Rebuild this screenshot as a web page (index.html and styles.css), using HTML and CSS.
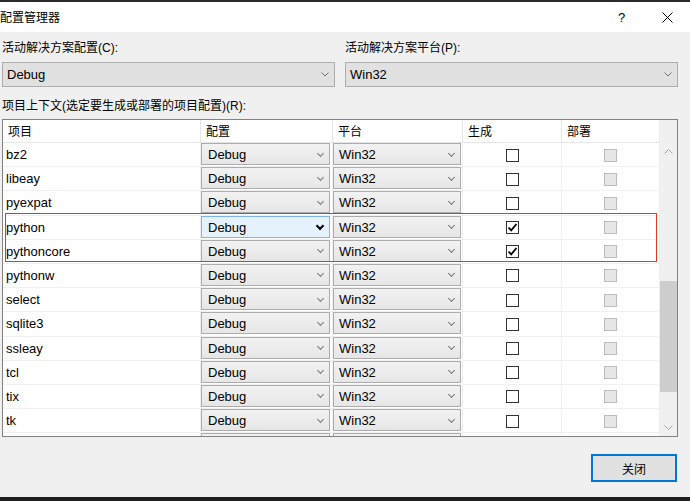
FILE: index.html
```html
<!DOCTYPE html>
<html lang="zh-CN">
<head>
<meta charset="utf-8">
<title>配置管理器</title>
<link rel="stylesheet" href="styles.css">
</head>
<body>
<div class="window">
  <div class="edge-top"></div>
  <header class="titlebar">
    <span class="title">配置管理器</span>
    <span class="cap-btn help">?</span>
    <span class="cap-btn close-x"><svg width="11" height="11" viewBox="0 0 11 11"><path d="M0.5 0.5 L10.5 10.5 M10.5 0.5 L0.5 10.5" stroke="#000" stroke-width="1" fill="none"/></svg></span>
  </header>
  <main class="content">
    <div class="pickers">
      <div class="picker">
        <div class="lbl">活动解决方案配置(C):</div>
        <div class="combo"><span>Debug</span><svg class="chev" width="8" height="5" viewBox="0 0 8 5"><path d="M0.5 0.5 L4 4 L7.5 0.5" stroke="#707070" fill="none"/></svg></div>
      </div>
      <div class="picker">
        <div class="lbl">活动解决方案平台(P):</div>
        <div class="combo"><span>Win32</span><svg class="chev" width="8" height="5" viewBox="0 0 8 5"><path d="M0.5 0.5 L4 4 L7.5 0.5" stroke="#707070" fill="none"/></svg></div>
      </div>
    </div>
    <div class="lbl ctx">项目上下文(选定要生成或部署的项目配置)(R):</div>
    <div class="grid">
      <div class="table">
        <div class="row head">
          <div class="cell">项目</div>
          <div class="cell">配置</div>
          <div class="cell">平台</div>
          <div class="cell">生成</div>
          <div class="cell">部署</div>
        </div>
        <div class="rows">
          <div class="row"><div class="cell name">bz2</div><div class="cell"><div class="dd cfg"><span>Debug</span><i></i></div></div><div class="cell"><div class="dd plat"><span>Win32</span><i></i></div></div><div class="cell chk"><span class="box"></span></div><div class="cell chk"><span class="box off"></span></div></div>
          <div class="row"><div class="cell name">libeay</div><div class="cell"><div class="dd cfg"><span>Debug</span><i></i></div></div><div class="cell"><div class="dd plat"><span>Win32</span><i></i></div></div><div class="cell chk"><span class="box"></span></div><div class="cell chk"><span class="box off"></span></div></div>
          <div class="row"><div class="cell name">pyexpat</div><div class="cell"><div class="dd cfg"><span>Debug</span><i></i></div></div><div class="cell"><div class="dd plat"><span>Win32</span><i></i></div></div><div class="cell chk"><span class="box"></span></div><div class="cell chk"><span class="box off"></span></div></div>
          <div class="row"><div class="cell name">python</div><div class="cell"><div class="dd cfg focus"><span>Debug</span><i></i></div></div><div class="cell"><div class="dd plat"><span>Win32</span><i></i></div></div><div class="cell chk"><span class="box on"><svg width="11" height="11" viewBox="0 0 11 11"><path d="M1.5 5.5 L4.2 8.3 L9.5 2" stroke="#000" stroke-width="1.8" fill="none"/></svg></span></div><div class="cell chk"><span class="box off"></span></div></div>
          <div class="row"><div class="cell name">pythoncore</div><div class="cell"><div class="dd cfg"><span>Debug</span><i></i></div></div><div class="cell"><div class="dd plat"><span>Win32</span><i></i></div></div><div class="cell chk"><span class="box on"><svg width="11" height="11" viewBox="0 0 11 11"><path d="M1.5 5.5 L4.2 8.3 L9.5 2" stroke="#000" stroke-width="1.8" fill="none"/></svg></span></div><div class="cell chk"><span class="box off"></span></div></div>
          <div class="row"><div class="cell name">pythonw</div><div class="cell"><div class="dd cfg"><span>Debug</span><i></i></div></div><div class="cell"><div class="dd plat"><span>Win32</span><i></i></div></div><div class="cell chk"><span class="box"></span></div><div class="cell chk"><span class="box off"></span></div></div>
          <div class="row"><div class="cell name">select</div><div class="cell"><div class="dd cfg"><span>Debug</span><i></i></div></div><div class="cell"><div class="dd plat"><span>Win32</span><i></i></div></div><div class="cell chk"><span class="box"></span></div><div class="cell chk"><span class="box off"></span></div></div>
          <div class="row"><div class="cell name">sqlite3</div><div class="cell"><div class="dd cfg"><span>Debug</span><i></i></div></div><div class="cell"><div class="dd plat"><span>Win32</span><i></i></div></div><div class="cell chk"><span class="box"></span></div><div class="cell chk"><span class="box off"></span></div></div>
          <div class="row"><div class="cell name">ssleay</div><div class="cell"><div class="dd cfg"><span>Debug</span><i></i></div></div><div class="cell"><div class="dd plat"><span>Win32</span><i></i></div></div><div class="cell chk"><span class="box"></span></div><div class="cell chk"><span class="box off"></span></div></div>
          <div class="row"><div class="cell name">tcl</div><div class="cell"><div class="dd cfg"><span>Debug</span><i></i></div></div><div class="cell"><div class="dd plat"><span>Win32</span><i></i></div></div><div class="cell chk"><span class="box"></span></div><div class="cell chk"><span class="box off"></span></div></div>
          <div class="row"><div class="cell name">tix</div><div class="cell"><div class="dd cfg"><span>Debug</span><i></i></div></div><div class="cell"><div class="dd plat"><span>Win32</span><i></i></div></div><div class="cell chk"><span class="box"></span></div><div class="cell chk"><span class="box off"></span></div></div>
          <div class="row"><div class="cell name">tk</div><div class="cell"><div class="dd cfg"><span>Debug</span><i></i></div></div><div class="cell"><div class="dd plat"><span>Win32</span><i></i></div></div><div class="cell chk"><span class="box"></span></div><div class="cell chk"><span class="box off"></span></div></div>
          <div class="row"><div class="cell name"></div><div class="cell"><div class="dd cfg"></div></div><div class="cell"><div class="dd plat"></div></div><div class="cell chk"><span class="box"></span></div><div class="cell chk"><span class="box off"></span></div></div>
        </div>
      </div>
      <div class="vscroll">
        <div class="sb-btn"><svg width="9" height="5" viewBox="0 0 9 5"><path d="M0.5 4.5 L4.5 0.5 L8.5 4.5" stroke="#a6a6a6" fill="none"/></svg></div>
        <div class="sb-track"><div class="sb-thumb"></div></div>
        <div class="sb-btn"><svg width="9" height="5" viewBox="0 0 9 5"><path d="M0.5 0.5 L4.5 4.5 L8.5 0.5" stroke="#a6a6a6" fill="none"/></svg></div>
      </div>
      <div class="mark"></div>
    </div>
    <div class="actions"><button class="btn">关闭</button></div>
  </main>
  <div class="edge-bottom"></div>
</div>
</body>
</html>
```
FILE: styles.css
```css
* { box-sizing: border-box; }
html, body { margin: 0; padding: 0; }
body {
  width: 690px;
  height: 501px;
  overflow: hidden;
  background: #f0f0f0;
  font-family: "Liberation Sans", "Noto Sans CJK SC", sans-serif;
  color: #000;
}
.window { width: 690px; height: 501px; display: flex; flex-direction: column; }
.edge-top { height: 2px; background: #2b2b2b; }
.edge-bottom { height: 4px; background: #1e1e1e; }

.titlebar {
  height: 30px;
  background: #fff;
  display: flex;
  align-items: center;
}
.title {
  font-family: "Noto Sans CJK SC", sans-serif;
  font-size: 12px;
  line-height: 16px;
  margin-left: 0;
  flex: 1;
}
.cap-btn {
  width: 46px;
  height: 30px;
  display: flex;
  align-items: center;
  justify-content: center;
}
.help { font-family: "Liberation Sans", sans-serif; font-size: 13px; padding-left: 1px; }

.content {
  height: 465px;
  padding: 8px 12px 0 2px;
  display: flex;
  flex-direction: column;
}
.lbl {
  font-family: "Liberation Sans", "Noto Sans CJK SC", sans-serif;
  font-size: 12px;
  line-height: 16px;
  white-space: nowrap;
}
.pickers { display: flex; gap: 10px; }
.picker { width: 333px; display: flex; flex-direction: column; }
.picker .lbl { margin-bottom: 6px; }
.combo {
  height: 25px;
  border: 1px solid #adadad;
  background: #e1e1e1;
  display: flex;
  align-items: center;
  justify-content: space-between;
  padding: 0 5px 0 4px;
  font-size: 13px;
}
.ctx { margin-top: 11px; }

.grid {
  position: relative;
  margin-top: 5px;
  width: 676px;
  height: 318px;
  border: 1px solid #828282;
  display: flex;
  background: #fff;
}
.table { width: 656px; display: flex; flex-direction: column; }
.row {
  display: grid;
  grid-template-columns: 197px 132px 130px 99px 98px;
  height: 24.2px;
  border-bottom: 1px solid #f0f0f0;
  flex: none;
}
.row .cell + .cell { border-left: 1px solid #f0f0f0; }
.head {
  height: 23px;
  border-bottom: 1px solid #e5e5e5;
}
.head .cell {
  font-size: 12px;
  line-height: 22px;
  padding-left: 5px;
  font-family: "Noto Sans CJK SC", sans-serif;
}
.head .cell + .cell { border-left: 1px solid #e5e5e5; }
.rows { flex: 1; overflow: hidden; }
.name {
  font-size: 13px;
  line-height: 24px;
  padding-left: 3px;
}
.dd {
  height: 22px;
  border: 1px solid #acacac;
  background: linear-gradient(#f2f2f2, #e6e6e6);
  display: flex;
  align-items: center;
  justify-content: space-between;
  padding: 1px 6px 0 6px;
  font-size: 13px;
}
.dd.cfg { width: 129px; }
.dd.plat { width: 128px; padding-left: 5px; }
.dd i {
  width: 5px;
  height: 5px;
  border-right: 1px solid #777;
  border-bottom: 1px solid #777;
  transform: rotate(45deg);
  margin-top: -3px;
}
.dd.focus { background: #e5f1fb; border-color: #7eb4ea; }
.dd.focus i { border-color: #000; border-width: 0 2px 2px 0; width: 6px; height: 6px; }
.chk { display: flex; align-items: center; justify-content: center; }
.box {
  width: 13px;
  height: 13px;
  border: 1px solid #333;
  background: #fff;
  display: flex;
  align-items: center;
  justify-content: center;
}
.box.off { background: #e6e6e6; border-color: #bcbcbc; }

.vscroll {
  width: 18px;
  background: #f0f0f0;
  padding-top: 23px;
  display: flex;
  flex-direction: column;
}
.sb-btn { height: 17px; display: flex; align-items: center; justify-content: center; }
.sb-track { flex: 1; }
.sb-thumb { margin: 121px 0 0 1px; width: 17px; height: 111px; background: #cdcdcd; }

.mark {
  position: absolute;
  left: 2px;
  top: 93px;
  width: 652px;
  height: 49px;
  border: 1px solid #e0391c;
}

.actions { display: flex; justify-content: flex-end; margin-top: 17px; padding-right: 1px; }
.btn {
  width: 86px;
  height: 28px;
  border: 2px solid #0078d7;
  background: #e1e1e1;
  font-family: "Noto Sans CJK SC", sans-serif;
  font-size: 12px;
  color: #000;
  padding: 0;
}
```
